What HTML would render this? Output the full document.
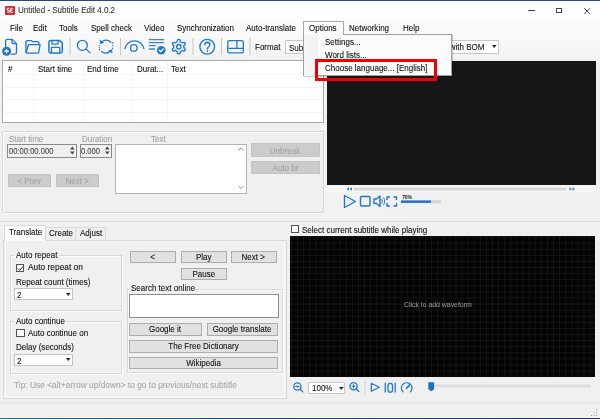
<!DOCTYPE html>
<html><head><meta charset="utf-8">
<style>
*{margin:0;padding:0;box-sizing:border-box}
html,body{width:600px;height:419px;overflow:hidden;background:#f0f0f0;font-family:"Liberation Sans",sans-serif;font-size:9px;color:#111;position:relative}
.a{position:absolute}
.t{position:absolute;white-space:nowrap;line-height:10px;transform-origin:0 0;transform:scaleX(.89);-webkit-text-stroke:.1px currentColor}
.btn{position:absolute;background:#e1e1e1;border:1px solid #adadad;text-align:center;line-height:10px;color:#111;white-space:nowrap}
.btn span{display:inline-block;transform:scaleX(.89);-webkit-text-stroke:.1px currentColor}
.dis{background:#cccccc;border-color:#c4c4c4;color:#a3a3a3}
.gb{position:absolute;border:1px solid #d8d8d8;box-shadow:inset 1px 1px 0 #fcfcfc,1px 1px 0 #fcfcfc}
.gl{color:#a0a0a0}
svg{position:absolute;overflow:visible}
</style></head><body>
<!-- top border -->
<div class="a" style="left:0;top:0;width:600px;height:1px;background:#1a4d86"></div>
<!-- title bar -->
<div class="a" style="left:0;top:1px;width:600px;height:17px;background:#fff"></div>
<div class="a" style="left:5px;top:6px;width:10px;height:8.5px;background:#e0262b;border-radius:1px"></div>
<svg style="left:5px;top:6px" width="10" height="9"><g fill="none" stroke="#fff" stroke-width="1"><path d="M4.3 2.3H2.2V4.2H4.3V6.3H2.2"/><path d="M8 2.3H5.8V6.3H8M5.8 4.2H7.5"/></g></svg>
<div class="t" style="left:18px;top:5px;color:#333">Untitled - Subtitle Edit 4.0.2</div>
<div class="a" style="left:528px;top:10px;width:6.5px;height:1px;background:#444"></div>
<div class="a" style="left:555.5px;top:7.5px;width:6.5px;height:5.5px;border:1px solid #444"></div>
<svg style="left:584px;top:7.5px" width="7" height="7"><path d="M0.3 0.3L6 6M6 0.3L0.3 6" stroke="#444" stroke-width="1"/></svg>
<!-- menu bar -->
<div class="a" style="left:0;top:18px;width:600px;height:41px;background:linear-gradient(#fcfcfc,#f8f8f8 50%,#f2f2f2)"></div>
<div class="t" style="left:9.7px;top:23px">File</div>
<div class="t" style="left:33px;top:23px">Edit</div>
<div class="t" style="left:59px;top:23px">Tools</div>
<div class="t" style="left:91px;top:23px">Spell check</div>
<div class="t" style="left:143.5px;top:23px">Video</div>
<div class="t" style="left:177px;top:23px">Synchronization</div>
<div class="t" style="left:245.5px;top:23px">Auto-translate</div>
<div class="t" style="left:349px;top:23px">Networking</div>
<div class="t" style="left:403px;top:23px">Help</div>

<!-- toolbar -->

<svg style="left:0;top:34px" width="300" height="26">
 <g fill="none" stroke="#1f78d1" stroke-width="1.3" stroke-linejoin="round" stroke-linecap="round">
  <path d="M5.6 12.5V7Q5.6 5.4 7.2 5.4H12.1L16.5 9.6V18.6Q16.5 20.1 15 20.1H11.5"/><path d="M11.9 5.6V8.4Q11.9 9.6 13.1 9.6H16.3"/>
  <path d="M25.9 18V8Q25.9 6.6 27.3 6.6H31.2L32.4 7.6H37.6Q38.8 7.6 38.8 8.9V10.6"/>
  <path d="M28.4 10.7H40.1L38.8 18.2Q38.6 19.2 37.6 19.2H27.2Q26.1 19.2 26.3 18.1Z"/>
  <path d="M50.4 6.6H59.8L62.3 9.1V17.2Q62.3 18.9 60.6 18.9H50.4Q48.9 18.9 48.9 17.2V8.3Q48.9 6.6 50.4 6.6Z" stroke-width="1.5"/><path d="M51.9 6.8V9.2Q51.9 10.1 52.8 10.1H57.2Q58.1 10.1 58.1 9.2V6.8"/><path d="M51.4 18.8V14Q51.4 13.3 52.1 13.3H59.1Q59.8 13.3 59.8 14V18.8"/>
  <circle cx="82.35" cy="11.35" r="5"/><path d="M86.2 15.1L90.1 18.9"/>
  <path d="M102.6 7.3A6.9 6.9 0 0 1 110.8 8.2"/><path d="M109.6 17.6A6.9 6.9 0 0 1 101.4 17.5"/>
  <path d="M99.2 11.2V11.8M99.2 13.2V13.8M99.4 15.4V16M112.8 8.6V9.2M112.8 11.2V11.8M112.6 14V14.6" stroke-width="1.1"/>
  <path d="M124.9 14.6A9.7 9.7 0 0 1 143.9 14.6"/><circle cx="133.8" cy="13.9" r="3.3"/>
  <circle cx="207.2" cy="12.75" r="7.35"/>
  <path d="M204.8 10.6Q205 8.3 207.5 8.3Q209.9 8.4 209.9 10.8Q209.9 12.2 208.4 13Q207.5 13.6 207.5 14.6V15.1" stroke-width="1.4"/>
  <path d="M229.3 6.55H241.9Q243.3 6.55 243.3 7.95V17.5Q243.3 18.95 241.9 18.95H229.2Q227.8 18.95 227.8 17.5V7.95Q227.8 6.55 229.3 6.55Z"/><path d="M227.8 14.3H243.3M236.9 6.55V14.3"/>
 </g>
 <g fill="#1f78d1">
  <circle cx="6.6" cy="17.2" r="4.5"/>
  <path d="M99.6 5.6L104 8.8L100.3 10.2Z"/><path d="M112.4 19.6L108.4 16.4L112.2 15.2Z"/>
  <circle cx="161.25" cy="16.2" r="4.3"/>
  <circle cx="207.4" cy="17.1" r="0.9"/>
 </g>
 <path d="M148.8 5.7H164.2M148.8 8.6H164.2M148.8 11.7H155.8M148.8 15H155" stroke="#3a86d2" stroke-width="1.3" fill="none"/>
 <mask id="gm"><rect x="165" y="0" width="30" height="26" fill="#fff"/><g fill="#000"><circle cx="178.8" cy="12.7" r="4.5"/><circle cx="178.8" cy="7.4" r="1.1"/><circle cx="178.8" cy="18" r="1.1"/><circle cx="174.2" cy="10.05" r="1.1"/><circle cx="183.4" cy="10.05" r="1.1"/><circle cx="174.2" cy="15.35" r="1.1"/><circle cx="183.4" cy="15.35" r="1.1"/></g></mask>
 <g fill="#1f78d1" mask="url(#gm)"><circle cx="178.8" cy="12.7" r="5.8"/><circle cx="178.8" cy="7" r="2.2"/><circle cx="178.8" cy="18.4" r="2.2"/><circle cx="173.86" cy="9.85" r="2.2"/><circle cx="183.74" cy="9.85" r="2.2"/><circle cx="173.86" cy="15.55" r="2.2"/><circle cx="183.74" cy="15.55" r="2.2"/></g>
 <circle cx="178.8" cy="12.7" r="2.2" fill="none" stroke="#1f78d1" stroke-width="1.3"/>
 <g stroke="#fff" stroke-width="1.3" fill="none" stroke-linecap="round">
  <path d="M6.6 15.4V19M4.8 17.2H8.4"/>
  <path d="M159.2 16.3L160.7 17.7L163.2 15"/>
 </g>
 <g fill="#c6c6c6">
  <rect x="69.5" y="4" width="1" height="17"/><rect x="120" y="4" width="1" height="17"/>
  <rect x="192.5" y="4" width="1" height="17"/><rect x="221" y="4" width="1" height="17"/><rect x="249.5" y="4" width="1" height="17"/>
 </g>
</svg>
<div class="t" style="left:255px;top:42.3px">Format</div>
<div class="a" style="left:284.5px;top:40px;width:30px;height:14px;background:#fff;border:1px solid #c6c6c6;overflow:hidden"><div class="t" style="left:3px;top:1.5px">Subrip</div></div>
<div class="a" style="left:420px;top:40px;width:78.5px;height:14px;background:#fff;border:1px solid #c6c6c6"></div>
<div class="t" style="left:442.5px;top:42.3px">8 with BOM</div>
<svg style="left:491.5px;top:45px" width="5" height="3"><path d="M0 0H4.5L2.25 3Z" fill="#222"/></svg>

<!-- subtitle table -->
<div class="a" style="left:2px;top:59.5px;width:321.5px;height:63.5px;background:#fff;border:1px solid #a9a9a9"></div>
<div class="a" style="left:3px;top:74px;width:320px;height:1px;background:#f6f6f6"></div>
<div class="a" style="left:3px;top:86.5px;width:320px;height:1px;background:#f4f4f4"></div>
<div class="a" style="left:3px;top:99px;width:320px;height:1px;background:#f4f4f4"></div>
<div class="a" style="left:3px;top:111.5px;width:320px;height:1px;background:#f4f4f4"></div>
<div class="a" style="left:33px;top:61px;width:1px;height:61px;background:#f4f4f4"></div>
<div class="a" style="left:82.5px;top:61px;width:1px;height:61px;background:#f4f4f4"></div>
<div class="a" style="left:132px;top:61px;width:1px;height:61px;background:#f4f4f4"></div>
<div class="a" style="left:166.5px;top:61px;width:1px;height:61px;background:#f4f4f4"></div>
<div class="t" style="left:7.5px;top:64.3px">#</div>
<div class="t" style="left:37.5px;top:64.3px">Start time</div>
<div class="t" style="left:87px;top:64.3px">End time</div>
<div class="t" style="left:136.5px;top:64.3px">Durat...</div>
<div class="t" style="left:170.5px;top:64.3px">Text</div>

<!-- edit group -->
<div class="gb" style="left:1.5px;top:131px;width:322px;height:82px"></div>
<div class="t gl" style="left:9px;top:133.5px">Start time</div>
<div class="t gl" style="left:82px;top:133.5px">Duration</div>
<div class="t gl" style="left:151px;top:134px">Text</div>
<div class="a" style="left:6.5px;top:143.5px;width:70px;height:14px;background:#f0f0f0;border:1px solid #8a8a8a"></div>
<div class="t" style="left:8.5px;top:145.7px;color:#444;transform:scaleX(.845)">00:00:00.000</div>
<svg style="left:69.5px;top:146px" width="5" height="9"><path d="M0 3.5L2.3 0.5L4.6 3.5ZM0 5.5L2.3 8.5L4.6 5.5Z" fill="#444"/></svg>
<div class="a" style="left:79.5px;top:143.5px;width:32.5px;height:14px;background:#f0f0f0;border:1px solid #8a8a8a"></div>
<div class="t" style="left:81px;top:145.7px;color:#444;transform:scaleX(.845)">0.000</div>
<svg style="left:105px;top:146px" width="5" height="9"><path d="M0 3.5L2.3 0.5L4.6 3.5ZM0 5.5L2.3 8.5L4.6 5.5Z" fill="#444"/></svg>
<div class="a" style="left:115px;top:143.5px;width:131.5px;height:50.5px;background:#fff;border:1px solid #b4b4b4"></div>
<svg style="left:238px;top:147px" width="6" height="43"><path d="M0.5 3.5L3 1L5.5 3.5M0.5 39L3 41.5L5.5 39" fill="none" stroke="#888" stroke-width="0.9"/></svg>
<div class="btn dis" style="left:7.5px;top:174px;width:43px;height:13px;line-height:13px"><span>&lt; Prev</span></div>
<div class="btn dis" style="left:55.5px;top:174px;width:43.5px;height:13px;line-height:13px"><span>Next &gt;</span></div>
<div class="btn dis" style="left:250.5px;top:142.5px;width:69.5px;height:14px;line-height:14px"><span>Unbreak</span></div>
<div class="btn dis" style="left:250.5px;top:160.5px;width:69.5px;height:13.5px;line-height:13.5px"><span>Auto br</span></div>

<!-- video -->
<div class="a" style="left:324px;top:59.5px;width:276px;height:160px;background:linear-gradient(90deg,#f3f3f3,#f0f0f0 40%)"></div>
<div class="a" style="left:326px;top:184px;width:270px;height:8px;background:#f6f6f6"></div>
<div class="a" style="left:326.5px;top:60.5px;width:269.5px;height:124px;background:#161616"></div>
<svg style="left:340px;top:184px" width="260" height="30">
 <rect x="13.5" y="3.5" width="213" height="3" fill="#d6d6d6"/>
 <path d="M9 3.3L6.5 5L9 6.7ZM12 3.3L9.5 5L12 6.7Z" fill="#2a7fd0"/>
 <path d="M229.5 3.3L232 5L229.5 6.7ZM232.5 3.3L235 5L232.5 6.7Z" fill="#2a7fd0"/>
 <g fill="none" stroke="#1e78d2" stroke-width="1.4" stroke-linejoin="round">
  <path d="M4.5 11.5L15.5 17.5L4.5 23.5Z"/>
  <rect x="20.5" y="12.5" width="9.5" height="9.5" rx="1"/>
  <path d="M34 15H36.5L40 12V22.5L36.5 19.5H34Z"/><path d="M41.5 15C42.5 16 42.5 18.5 41.5 19.5M43.5 13.5C45 15.5 45 19 43.5 21" stroke-width="1"/>
  <path d="M47 16V13H50M53.5 13H56.5V16M56.5 19V22H53.5M50 22H47V19"/>
 </g>
 <rect x="61" y="16.5" width="39.5" height="2.5" fill="#d6d6d6" stroke="#c9c9c9" stroke-width=".5"/>
 <rect x="61" y="16.5" width="30" height="2.3" fill="#1e6fc0"/>
 <text x="62.2" y="14.7" font-size="4.8" fill="#222" font-weight="bold" font-family="Liberation Sans">70%</text>
</svg>

<!-- splitter line -->
<div class="a" style="left:0;top:220.5px;width:600px;height:1px;background:#dcdcdc"></div>

<!-- tabs -->
<div class="a" style="left:3px;top:239.5px;width:284px;height:159.5px;border:1px solid #d8d8d8;border-top-color:#dadada;background:#f0f0f0"></div>
<div class="a" style="left:5px;top:240.5px;width:280px;height:157px;border:1px solid #fcfcfc;border-top:none"></div>
<div class="a" style="left:3.5px;top:225px;width:42px;height:15.5px;background:#fbfbfb;border:1px solid #dadada;border-bottom:none"></div>
<div class="a" style="left:45.5px;top:227px;width:30px;height:13px;background:#f0f0f0;border:1px solid #dadada;border-bottom:none;border-left:none"></div>
<div class="a" style="left:75.5px;top:227px;width:30px;height:13px;background:#f0f0f0;border:1px solid #dadada;border-bottom:none;border-left:none"></div>
<div class="t" style="left:9px;top:227.3px">Translate</div>
<div class="t" style="left:48.5px;top:228.3px">Create</div>
<div class="t" style="left:79.5px;top:228.3px">Adjust</div>

<div class="gb" style="left:9.5px;top:254.5px;width:112px;height:56px"></div>
<div class="a" style="left:14px;top:251px;width:45px;height:5px;background:#f0f0f0"></div>
<div class="t" style="left:15.5px;top:249.9px">Auto repeat</div>
<div class="a" style="left:15.5px;top:263.5px;width:8.5px;height:8.5px;background:#fff;border:1px solid #555"></div>
<svg style="left:15.5px;top:263.5px" width="9" height="9"><path d="M1.8 4.4L3.7 6.3L7.2 2.4" fill="none" stroke="#222" stroke-width="1"/></svg>
<div class="t" style="left:27.5px;top:262.3px;transform:scaleX(.93)">Auto repeat on</div>
<div class="t" style="left:15.5px;top:276.9px">Repeat count (times)</div>
<div class="a" style="left:13.5px;top:288.2px;width:59px;height:12.2px;background:#fff;border:1px solid #c4c4c4"></div>
<div class="t" style="left:17.3px;top:290.2px">2</div>
<svg style="left:65.5px;top:293px" width="5" height="3"><path d="M0 0H4.5L2.25 3Z" fill="#222"/></svg>

<div class="gb" style="left:9.5px;top:320.5px;width:112px;height:53.5px"></div>
<div class="a" style="left:14px;top:318px;width:52px;height:5px;background:#f0f0f0"></div>
<div class="t" style="left:15.5px;top:315.9px">Auto continue</div>
<div class="a" style="left:16px;top:329px;width:8.5px;height:8px;background:#fff;border:1px solid #555"></div>
<div class="t" style="left:28px;top:327.8px">Auto continue on</div>
<div class="t" style="left:16px;top:341.5px">Delay (seconds)</div>
<div class="a" style="left:13.5px;top:353.5px;width:59px;height:12px;background:#fff;border:1px solid #c4c4c4"></div>
<div class="t" style="left:17.3px;top:355.5px">2</div>
<svg style="left:65.5px;top:358px" width="5" height="3"><path d="M0 0H4.5L2.25 3Z" fill="#222"/></svg>
<div class="t gl" style="left:14px;top:380.3px;color:#a8a8a8;transform:scaleX(.93)">Tip: Use &lt;alt+arrow up/down&gt; to go to previous/next subtitle</div>

<div class="btn" style="left:130px;top:250.5px;width:46px;height:12.5px"><span>&lt;</span></div>
<div class="btn" style="left:180.5px;top:250.5px;width:46px;height:12.5px"><span>Play</span></div>
<div class="btn" style="left:230.5px;top:250.5px;width:46px;height:12.5px"><span>Next &gt;</span></div>
<div class="btn" style="left:180.5px;top:267.5px;width:46px;height:12.5px"><span>Pause</span></div>
<div class="gb" style="left:126.5px;top:288.5px;width:156.5px;height:84.5px"></div>
<div class="a" style="left:129px;top:286px;width:66px;height:5px;background:#f0f0f0"></div>
<div class="t" style="left:130.5px;top:282.8px">Search text online</div>
<div class="a" style="left:128.5px;top:294px;width:150px;height:23.5px;background:#fff;border:1px solid #8e8e8e"></div>
<div class="btn" style="left:129px;top:322.5px;width:73px;height:13px;line-height:11px"><span>Google it</span></div>
<div class="btn" style="left:206.5px;top:322.5px;width:71.5px;height:13px;line-height:11px"><span>Google translate</span></div>
<div class="btn" style="left:129px;top:339.5px;width:149px;height:13px;line-height:11px"><span>The Free Dictionary</span></div>
<div class="btn" style="left:129px;top:356.5px;width:149px;height:12.5px;line-height:11px"><span>Wikipedia</span></div>

<!-- waveform -->
<div class="a" style="left:290.5px;top:224.5px;width:8px;height:8px;background:#fff;border:1px solid #555"></div>
<div class="t" style="left:302.4px;top:224.6px">Select current subtitle while playing</div>
<div class="a" style="left:290px;top:235.8px;width:305px;height:141px;background-color:#040404;background-image:linear-gradient(90deg,#151515 1px,transparent 1px),linear-gradient(#151515 1px,transparent 1px);background-size:6.1px 6.1px;background-position:1px 0.6px"></div>
<div class="t" style="left:404.2px;top:300.3px;font-size:8px;color:#8f8f8f;transform:scaleX(.86)">Click to add waveform</div>
<svg style="left:290px;top:378px" width="310" height="18">
 <g fill="none" stroke="#1f78d1" stroke-width="1.3" stroke-linecap="round">
  <circle cx="7.4" cy="8.5" r="3.7"/><path d="M10.2 11.3L12.8 13.9"/><path d="M5.8 8.5H9"/>
  <circle cx="63.6" cy="8.3" r="3.6"/><path d="M66.3 11L68.8 13.5"/><path d="M62 8.3H65.2M63.6 6.7V9.9" stroke-width="1.1"/>
  <path d="M81.3 5.2L89.3 9.2L81.3 13.2Z" stroke-linejoin="round" stroke-width="1.2"/>
  <path d="M95.3 4.8V14.6M105.2 4.8V14.6" stroke-linecap="butt"/><rect x="98" y="5.3" width="4.5" height="8.8" rx="2.2"/>
  <path d="M112.9 13.7A5.3 5.3 0 1 1 120.5 13.7"/>
 </g>
 <path d="M116.7 10.3L119.8 6.9" stroke="#1f78d1" stroke-width="1.7" stroke-linecap="round"/>
 <path d="M112.2 7.5L113.4 8.1M116.7 4.3V5.6M121.2 7.5L120 8.1" stroke="#f0f0f0" stroke-width=".8"/>
 <rect x="74.5" y="2.5" width="1" height="14" fill="#d4d4d4"/>
 <path d="M138.3 4.2H144.2V11.2L141.25 13.3L138.3 11.2Z" fill="#1f6fc2"/>
 <rect x="145" y="6.5" width="156" height="3" fill="#dedede"/>
</svg>
<div class="a" style="left:307.5px;top:381.5px;width:37.5px;height:12.5px;background:#fff;border:1px solid #c6c6c6;border-radius:1px"></div>
<div class="t" style="left:311.5px;top:383px">100%</div>
<svg style="left:338.5px;top:386.5px" width="5" height="3"><path d="M0 0H4.5L2.25 3Z" fill="#222"/></svg>

<!-- status bar -->
<div class="a" style="left:0;top:402px;width:600px;height:2px;background:#e9e9e9"></div>
<svg style="left:588px;top:408px" width="12" height="9"><g fill="#9a9a9a"><rect x="8" y="1.5" width="1" height="1"/><rect x="5.5" y="4.5" width="1" height="1"/><rect x="8" y="4.5" width="1" height="1"/><rect x="3" y="7" width="1" height="1"/><rect x="5.5" y="7" width="1" height="1"/><rect x="8" y="7" width="1" height="1"/></g></svg>
<!-- bottom border -->
<div class="a" style="left:0;top:417px;width:600px;height:1px;background:#fafafa"></div>
<div class="a" style="left:0;top:417.5px;width:600px;height:1.5px;background:linear-gradient(90deg,#1b6690,#123f7a 50%,#0e2f70)"></div>

<!-- options menu -->
<div class="a" style="left:303px;top:33.5px;width:149px;height:42.5px;background:#fbfbfb;border:1px solid #a0a0a0;box-shadow:1px 1px 1px rgba(0,0,0,.18)"></div>
<div class="a" style="left:303px;top:20.5px;width:41px;height:14.5px;background:#fbfbfb;border:1px solid #a8a8a8;border-bottom:none"></div>
<div class="a" style="left:304px;top:35px;width:14px;height:40.5px;background:linear-gradient(90deg,#f6f6f6,#f1f1f1)"></div>
<div class="t" style="left:308.5px;top:23px">Options</div>
<div class="t" style="left:324.5px;top:36.8px">Settings...</div>
<div class="t" style="left:324.5px;top:50.1px">Word lists...</div>
<div class="t" style="left:324.5px;top:62.6px">Choose language... [English]</div>
<div class="a" style="left:315.3px;top:59px;width:122.2px;height:22px;border:3.6px solid #f20000"></div>
</body></html>
